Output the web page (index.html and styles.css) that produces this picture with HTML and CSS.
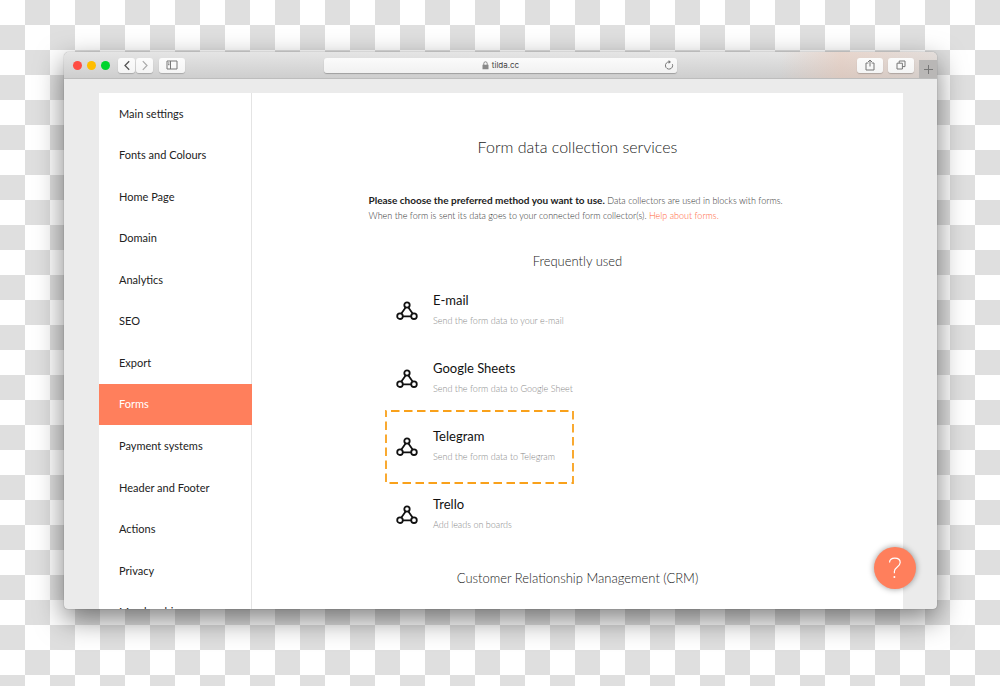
FILE: index.html
```html
<!DOCTYPE html>
<html lang="en">
<head>
<meta charset="utf-8">
<meta name="viewport" content="width=device-width, initial-scale=1">
<title>Form data collection services</title>
<link rel="stylesheet" href="styles.css">
</head>
<body>
<svg class="sprite" aria-hidden="true">
  <symbol id="hook" viewBox="0 0 22 20">
    <g fill="none" stroke="currentColor" stroke-width="1.8">
      <path d="M9.8 6.2 5.2 12.7M12.2 6.2l4.6 6.5M6.8 15.3h8.4"/>
      <circle cx="11" cy="4" r="2.7"/><circle cx="4" cy="15.2" r="2.8"/><circle cx="18" cy="15.2" r="2.8"/>
    </g>
  </symbol>
</svg>
<div class="window">
  <header class="toolbar">
    <div class="tools">
      <div class="lights">
        <button class="light red" aria-label="Close"></button>
        <button class="light yellow" aria-label="Minimize"></button>
        <button class="light green" aria-label="Full screen"></button>
      </div>
      <div class="history">
        <button class="tool small" aria-label="Back"><svg width="8" height="11" viewBox="0 0 8 11"><path d="M6.2 1.2 2 5.5l4.2 4.3" fill="none" stroke="#555" stroke-width="1.3"/></svg></button>
        <button class="tool small" aria-label="Forward"><svg width="8" height="11" viewBox="0 0 8 11"><path d="M1.8 1.2 6 5.5 1.8 9.8" fill="none" stroke="#aaa" stroke-width="1.2"/></svg></button>
      </div>
      <button class="tool" aria-label="Show sidebar"><svg width="12" height="10" viewBox="0 0 12 10"><path d="M1 1h10v8H1zM4.5 1v8M2 3h1.5M2 4.7h1.5" fill="none" stroke="#777"/></svg></button>
    </div>
    <div class="address">
      <svg width="7" height="9" viewBox="0 0 7 9"><path d="M1.8 4V2.5a1.7 1.7 0 0 1 3.4 0V4" fill="none" stroke="#888"/><path d="M.5 3.8h6v4.4h-6z" fill="#888"/></svg>
      <span>tilda.cc</span>
      <button class="reload" aria-label="Reload"><svg width="10" height="10" viewBox="0 0 10 10"><path d="M8.4 4.2A3.6 3.6 0 1 1 5 1.9h.8" fill="none" stroke="#777"/><path d="M4.6 0 7 1.9 4.6 3.8z" fill="#777"/></svg></button>
    </div>
    <div class="tools end">
      <button class="tool" aria-label="Share"><svg width="10" height="12" viewBox="0 0 10 12"><path d="M3.4 4H1v7h8V4H6.6M5 7.5V1M3 3l2-2 2 2" fill="none" stroke="#777"/></svg></button>
      <button class="tool" aria-label="Show tabs"><svg width="10" height="10" viewBox="0 0 10 10"><path d="M1 3.2h5.4V9H1zM3.2 3V1H9v5.6H6.6" fill="none" stroke="#777"/></svg></button>
      <button class="new-tab" aria-label="New tab"><svg width="9" height="9" viewBox="0 0 9 9"><path d="M4.5 0v9M0 4.5h9" stroke="#777"/></svg></button>
    </div>
  </header>
  <div class="page">
    <nav class="menu" aria-label="Settings">
      <a href="#main">Main settings</a>
      <a href="#fonts">Fonts and Colours</a>
      <a href="#home">Home Page</a>
      <a href="#domain">Domain</a>
      <a href="#analytics">Analytics</a>
      <a href="#seo">SEO</a>
      <a href="#export">Export</a>
      <a href="#forms" class="active" aria-current="page">Forms</a>
      <a href="#payment">Payment systems</a>
      <a href="#header">Header and Footer</a>
      <a href="#actions">Actions</a>
      <a href="#privacy">Privacy</a>
      <a href="#membership">Membership</a>
    </nav>
    <main class="content">
      <h1>Form data collection services</h1>
      <p class="intro"><strong>Please choose the preferred method you want to use.</strong> Data collectors are used in blocks with forms.<br>When the form is sent its data goes to your connected form collector(s). <a href="#help">Help about forms.</a></p>
      <h2>Frequently used</h2>
      <ul class="services">
        <li><svg class="hook"><use href="#hook"/></svg><div><h3>E-mail</h3><p>Send the form data to your e-mail</p></div></li>
        <li><svg class="hook"><use href="#hook"/></svg><div><h3>Google Sheets</h3><p>Send the form data to Google Sheet</p></div></li>
        <li><svg class="hook"><use href="#hook"/></svg><div><h3>Telegram</h3><p>Send the form data to Telegram</p></div>
          <svg class="marker" viewBox="0 0 189 74" aria-hidden="true"><rect x="1" y="1" width="187" height="72" fill="none" stroke="#f9a11b" stroke-width="1.8" stroke-dasharray="8.5 4.5" stroke-dashoffset="-5"/></svg></li>
        <li><svg class="hook"><use href="#hook"/></svg><div><h3>Trello</h3><p>Add leads on boards</p></div></li>
      </ul>
      <h2>Customer Relationship Management (CRM)</h2>
    </main>
  </div>
  <button class="help" aria-label="Help"><svg width="14" height="22" viewBox="0 0 14 22"><path d="M1.5 5.5C1.7 2.8 3.8 1.2 6.8 1.2c3.2 0 5.4 1.7 5.4 4.4 0 4.3-5.8 4.4-5.8 8.7v2" fill="none" stroke="#fff" stroke-width="1.2"/><circle cx="6.4" cy="20" r="1" fill="#fff"/></svg></button>
</div>
</body>
</html>
```
FILE: styles.css
```css
* { box-sizing: border-box; }

body {
  margin: 0;
  height: 100vh;
  padding: 52px 63px 77px 64px;
  background: repeating-conic-gradient(#dfdfdf 0 25%, #fff 0 50%) 0 0 / 50px 50px;
  font-family: Lato, "Open Sans", sans-serif;
  color: #222;
}

h1, h2, h3, p, ul { margin: 0; padding: 0; font-weight: 300; }
button { border: 0; padding: 0; cursor: pointer; }
a { text-decoration: none; }
.sprite { position: absolute; width: 0; height: 0; }

.window {
  position: relative;
  display: flex;
  flex-direction: column;
  height: 100%;
  overflow: hidden;
  border-radius: 5px 5px 4px 4px;
  background: #ebebeb;
  box-shadow: 0 0 1px rgba(0, 0, 0, .5), 0 10px 28px rgba(0, 0, 0, .5);
}

.toolbar {
  flex: none;
  display: grid;
  grid-template-columns: 1fr minmax(0, 353px) 1fr;
  align-items: center;
  height: 27px;
  border-bottom: 1px solid #bdbdbd;
  background:
    linear-gradient(90deg, transparent 82%, rgba(235, 195, 175, .45) 89%, rgba(225, 205, 195, .3) 100%),
    linear-gradient(#e5e5e5, #cecece);
}
.tools { display: flex; align-items: center; gap: 6px; padding-left: 9px; }
.tools.end { justify-content: flex-end; gap: 5px; height: 100%; padding: 0; }
.lights { display: flex; gap: 5px; margin-right: 2px; }
.light { width: 9px; height: 9px; border-radius: 50%; }
.red { background: #ff4d43; }
.yellow { background: #ffbd00; }
.green { background: #00d42c; }
.history { display: flex; gap: 1px; }
.tool {
  display: flex;
  align-items: center;
  justify-content: center;
  width: 26px;
  height: 15px;
  border-radius: 3px;
  background: linear-gradient(#fcfcfc, #f4f4f4);
  box-shadow: 0 1px 1px rgba(0, 0, 0, .2);
}
.tool.small { width: 17px; }
.new-tab {
  display: flex;
  align-items: center;
  justify-content: center;
  align-self: flex-end;
  width: 18px;
  height: 18px;
  background: #b9b7b6;
}

.address {
  position: relative;
  display: flex;
  align-items: center;
  justify-content: center;
  gap: 3px;
  height: 15px;
  border-radius: 3px;
  background: linear-gradient(#fbfbfb, #f1f1f1);
  box-shadow: 0 1px 1px rgba(0, 0, 0, .25);
  font: 8px/15px Inter, sans-serif;
  color: #444;
}
.reload { position: absolute; right: 3px; display: flex; background: none; }

.page {
  flex: 1;
  display: flex;
  align-items: flex-start;
  min-height: 0;
  margin: 14px 34px 0 35px;
  overflow: hidden;
  background: #fff;
}
.menu {
  flex: none;
  display: flex;
  flex-direction: column;
  width: 153px;
  min-height: 540px;
  border-right: 1px solid #e4e4e4;
}
.menu a {
  flex: 1;
  display: flex;
  align-items: center;
  padding-left: 20px;
  font-size: 11px;
  line-height: 16px;
  color: #222;
}
.menu a.active { margin-right: -1px; background: #ff7f5c; color: #fff; }

.content { flex: 1; min-width: 0; padding-top: 42px; }
h1, h2 { text-align: center; }
h1 { font-size: 16px; line-height: 24px; }
h2 { font-size: 13px; line-height: 22px; }
.intro {
  width: 418px;
  max-width: 100%;
  margin: 34px auto 27px;
  font-size: 9px;
  line-height: 15px;
  white-space: nowrap;
  color: #333;
}
.intro strong { font-size: 10px; font-weight: 700; color: #222; }
.intro a { color: #ff6236; }

.services { width: 383px; max-width: 100%; margin: 5px auto 18px; list-style: none; }
.services li {
  position: relative;
  display: flex;
  align-items: center;
  gap: 15px;
  padding: 13px 10px;
}
.hook { flex: none; width: 22px; height: 20px; color: #111; }
.services h3 { font-size: 13px; line-height: 20px; font-weight: 400; color: #111; }
.services p { font-size: 9px; line-height: 22px; color: #888; }
.marker { position: absolute; left: -1px; top: -3px; width: 189px; height: 74px; }

.help {
  position: absolute;
  right: 21px;
  bottom: 20px;
  display: flex;
  align-items: center;
  justify-content: center;
  width: 42px;
  height: 42px;
  border-radius: 50%;
  background: #ff7f5c;
  box-shadow: 0 0 6px rgba(0, 0, 0, .4);
}
```
